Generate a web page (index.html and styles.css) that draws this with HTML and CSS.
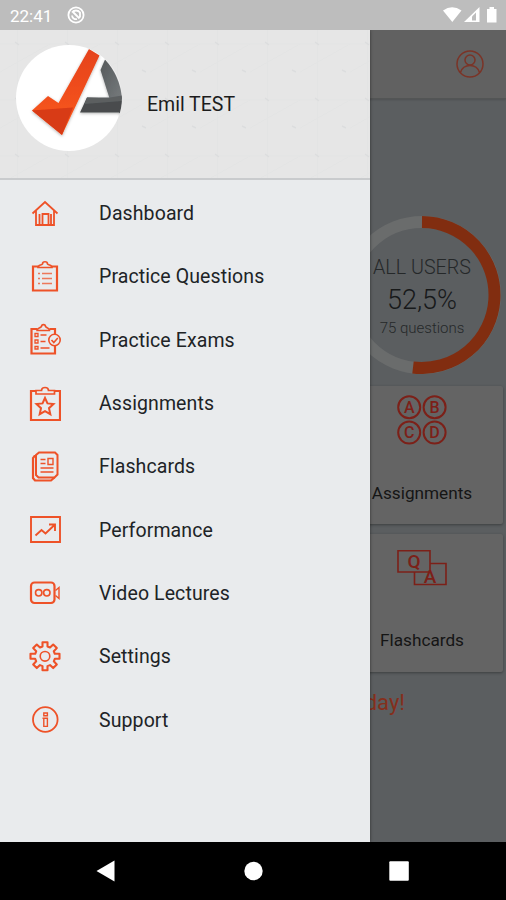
FILE: index.html
```html
<!DOCTYPE html>
<html lang="en">

<head>
    <meta charset="UTF-8">
    <meta name="viewport" content="width=device-width, initial-scale=1.0">
    <title>Dashboard</title>
    <link rel="stylesheet" href="styles.css">
</head>

<body>
    <div class="status-bar">
        <span class="time">22:41</span>
        <svg class="status-app" width="18" height="18" viewBox="0 0 18 18">
            <circle cx="9" cy="9" r="7.6" fill="none" stroke="#fff" stroke-width="1.8" />
            <path d="M5 6.5a5 5 0 0 1 8 0v5M5 9.500a4 4 0 0 0 5 3.500M5.500 5.500l7 7" fill="none" stroke="#fff" stroke-width="1.8" />
        </svg>
        <svg class="status-icons" width="56" height="18" viewBox="0 0 56 18">
            <path d="M0 4.500Q9 -2 18.500 4.500L9.300 16z" fill="#fff" />
            <path d="M21 16L36.500 1v15z" fill="#fff" />
            <path d="M29 10.500l4-4v8h-4z" fill="#bdbdbd" />
            <path d="M44 3h2.500V1h4.500v2h2.500v13.500H44z" fill="#fff" />
        </svg>
    </div>

    <div class="screen">
        <!-- Dashboard, dimmed while the menu is open -->
        <div class="page">
            <div class="toolbar">
                <svg width="28" height="28" viewBox="0 0 28 28" fill="none" stroke="#7b3427" stroke-width="1.5">
                    <circle cx="14" cy="14" r="13" />
                    <circle cx="14" cy="10" r="5" />
                    <path d="M4.500 22.500C6 17.500 10 15.500 14 15.500s8 2 9.500 7" />
                </svg>
            </div>
            <div class="column">
                <div class="score">
                    <svg class="ring" width="158" height="158" viewBox="0 0 158 158" fill="none" stroke-width="12">
                        <circle cx="79" cy="79" r="73" stroke="#6a6c6c" />
                        <path d="M79 6A73 73 0 1 1 70 151.500" stroke="#812d10" />
                    </svg>
                    <div class="score-text">
                        <div class="score-title">ALL USERS</div>
                        <div class="score-value">52,5%</div>
                        <div class="score-count">75 questions</div>
                    </div>
                </div>
                <div class="card">
                    <svg width="50" height="50" viewBox="0 0 50 50">
                        <g fill="none" stroke="#7c2018" stroke-width="2">
                            <circle cx="12.200" cy="12.200" r="11" />
                            <circle cx="37.600" cy="12.200" r="11" />
                            <circle cx="12.200" cy="37.600" r="11" />
                            <circle cx="37.600" cy="37.600" r="11" />
                        </g>
                        <g class="letters">
                            <text x="12.200" y="18">A</text>
                            <text x="37.600" y="18">B</text>
                            <text x="12.200" y="43.400">C</text>
                            <text x="37.600" y="43.400">D</text>
                        </g>
                    </svg>
                    <span>Assignments</span>
                </div>
                <div class="card">
                    <svg width="50" height="50" viewBox="0 0 50 50">
                        <path d="M17.500 22V34.500H49V13.500H33.500M1 .8H33V22H1z" fill="none" stroke="#7c2018" stroke-width="1.600" />
                        <g class="letters letters-big">
                            <text x="17" y="18">Q</text>
                            <text x="33" y="33">A</text>
                        </g>
                    </svg>
                    <span>Flashcards</span>
                </div>
            </div>
            <div class="motto">day!</div>
        </div>

        <!-- Side menu -->
        <div class="drawer">
            <div class="profile">
                <svg class="pattern" width="370" height="148">
                    <defs>
                        <pattern id="dots" width="50" height="56" patternUnits="userSpaceOnUse">
                            <path d="M17.500 0V56M0 14H50M0 42l50-28" fill="none" stroke="#e3e4e4" stroke-width="1" />
                            <path d="M15 12l4 3M42 40l4 2" stroke="#dcddde" stroke-width="1.500" />
                        </pattern>
                    </defs>
                    <rect width="370" height="148" fill="url(#dots)" />
                </svg>
                <svg class="avatar" width="108" height="108" viewBox="0 0 108 108">
                    <defs>
                        <linearGradient id="check" x1="0" y1="0" x2="0" y2="1">
                            <stop offset="0" stop-color="#e5421a" />
                            <stop offset="1" stop-color="#fb5a1c" />
                        </linearGradient>
                        <linearGradient id="leg" x1="0" y1="0" x2="1" y2="1">
                            <stop offset="0" stop-color="#55595b" />
                            <stop offset="1" stop-color="#777b7d" />
                        </linearGradient>
                        <clipPath id="round"><circle cx="54" cy="54" r="53" /></clipPath>
                        <filter id="soft" x="-20%" y="-20%" width="140%" height="140%">
                            <feDropShadow dx="0" dy="1" stdDeviation="1.500" flood-opacity=".3" />
                        </filter>
                    </defs>
                    <circle cx="54" cy="54" r="53" fill="#fff" />
                    <g clip-path="url(#round)">
                        <g filter="url(#soft)">
                            <path d="M90 15.500Q105 32 107 54L95 56 85.500 26z" fill="url(#leg)" />
                            <path d="M72 53.500L108 55V73l-4-4.500H65z" fill="#484b4d" />
                            <path d="M72 53.500H95l12-2v5.500L69.500 60z" fill="#5b5f61" />
                        </g>
                        <g filter="url(#soft)">
                            <path d="M74 5L84.500 11.500L47 91L17 66.500L33 52L43.500 59z" fill="url(#check)" />
                            <path d="M17 66.500L58 63.500 47 91z" fill="#d83a18" />
                        </g>
                    </g>
                </svg>
                <span class="user-name">Emil TEST</span>
            </div>
            <ul class="menu">
                <li>
                    <svg viewBox="0 0 32 36" stroke-width="1.800">
                        <path d="M3.500 17.500L16 6 28.500 17.500M7 15V29H25V15M10.500 18V28.500M13.500 28.500V18H19.500V28.500M22 18V28.500" />
                    </svg>
                    <span>Dashboard</span>
                </li>
                <li>
                    <svg viewBox="0 0 32 36" stroke-width="1.700">
                        <path d="M9 7.500H4V31.500H28V7.500H23" stroke-width="2.200" />
                        <path d="M9 8.500c0-3 3-2 4.500-3.500 0-3 5-3 5 0C20 6.500 23 5.500 23 8.500z" />
                        <path d="M9 14.500h2M13 14.500h10M9 19.500h2M13 19.500h10M9 24.500h2M13 24.500h10" stroke-opacity=".75" />
                    </svg>
                    <span>Practice Questions</span>
                </li>
                <li>
                    <svg viewBox="0 0 32 36" stroke-width="1.600">
                        <path d="M8 7H2.500V31.500H26V24M26 12V7H20.500" stroke-width="2.200" />
                        <path d="M8 8.500c0-3 3-2 4.500-4 0-2.500 4-2.500 4 0C18 6.500 20.500 5.500 20.500 8.500z" />
                        <path d="M6 11.500h3v3H6zM6 18h3v3H6zM6 24.500h3v2.500H6zM11.500 13h6M11.500 19.500h5M11.500 26h9" stroke-width="1.300" />
                        <circle cx="25.500" cy="18" r="5.700" />
                        <path d="M22.500 18l2.300 2.500 4-4.500" />
                    </svg>
                    <span>Practice Exams</span>
                </li>
                <li>
                    <svg viewBox="0 0 32 36" stroke-width="1.700">
                        <path d="M7 5H2V34H31V5H25.500" stroke-width="2.200" />
                        <path d="M7 8V4.500h5.500c0-4 7-4 7 0h6V8z" />
                        <path d="M16 12l2.500 5.400 6 .7-4.500 4.100 1.300 6-5.300-3.100-5.300 3.100 1.300-6L7.500 18.100l6-.7z" stroke-width="2" />
                    </svg>
                    <span>Assignments</span>
                </li>
                <li>
                    <svg viewBox="0 0 32 36" stroke-width="2">
                        <path d="M10 3.500H26l2.500 2.500V25.500l-3 3H9.500L7 26V6z" />
                        <path d="M7 7H5.500L4 9V29l2 2.500H22L25.500 28.500" stroke-width="2.200" />
                        <path d="M11.500 10.500h5M11.500 14.500h5M19 9.500h5v6h-5zM11.500 19h13M11.500 23h13" stroke-width="1.400" />
                    </svg>
                    <span>Flashcards</span>
                </li>
                <li>
                    <svg viewBox="0 0 32 36" stroke-width="1.900">
                        <path d="M2 5H31V30H2z" />
                        <path d="M6.500 23.500L12.500 18l4 3.500L25.500 13M20 12.500h6V19" />
                    </svg>
                    <span>Performance</span>
                </li>
                <li>
                    <svg viewBox="0 0 32 36" stroke-width="1.600">
                        <rect x="2" y="7.500" width="23.500" height="20.500" rx="3.500" stroke-width="2.200" />
                        <circle cx="9.700" cy="17.800" r="3.200" />
                        <circle cx="17.800" cy="17.800" r="3.200" />
                        <path d="M26.500 15.500l3.500-3V23.500l-3.500-3" stroke-width="1.400" />
                    </svg>
                    <span>Video Lectures</span>
                </li>
                <li>
                    <svg viewBox="0 0 32 36" stroke-width="2.100" stroke-linejoin="round">
                        <path d="M13.500 3.300h5v4.200l2.500 1 3.200-3 3.600 3.600-3 3.200 1 2.500H30.500v5H25.800l-1 2.500 3 3.200-3.600 3.600-3.200-3-2.500 1V31.300h-5V27.100l-2.500-1-3.200 3-3.600-3.600 3-3.200-1-2.500H1.500v-5H6.200l1-2.500-3-3.200L7.800 5.500l3.200 3 2.500-1z" />
                        <circle cx="16" cy="17.300" r="4.800" stroke-width="1.600" />
                    </svg>
                    <span>Settings</span>
                </li>
                <li>
                    <svg viewBox="0 0 32 36" stroke-width="1.800">
                        <circle cx="16.300" cy="17.500" r="12.300" />
                        <path d="M14.800 11h3.600v2.800h-3.600zM13.500 16.200h4.900v8.200h-3.600v-8" stroke-width="1.400" />
                    </svg>
                    <span>Support</span>
                </li>
            </ul>
        </div>
    </div>

    <div class="nav-bar">
        <svg width="22" height="22" viewBox="0 0 22 22"><path d="M.500 11L18.500 .5v21z" /></svg>
        <svg width="22" height="22" viewBox="0 0 22 22"><circle cx="11.500" cy="11" r="9.200" /></svg>
        <svg width="22" height="22" viewBox="0 0 22 22"><rect x="1.300" y="1.300" width="19.500" height="19.500" rx="1" /></svg>
    </div>
</body>

</html>
```
FILE: styles.css
```css
* {
    box-sizing: border-box;
    margin: 0;
    padding: 0;
}

body {
    font-family: Roboto, sans-serif;
    display: flex;
    flex-direction: column;
    width: 506px;
    height: 900px;
    overflow: hidden;
    background-color: #000;
}

svg {
    display: block;
    flex-shrink: 0;
}

.status-bar {
    display: flex;
    align-items: center;
    height: 30px;
    padding: 0 7px 0 10px;
    background-color: #bdbdbd;
    color: #fff;
}

.time {
    width: 57px;
    font-size: 17px;
    line-height: 30px;
    padding-top: 1px;
}

.status-icons {
    margin-left: auto;
}

.screen {
    position: relative;
    height: 812px;
    overflow: hidden;
}

.page {
    height: 812px;
    background-color: #5b5e60;
}

.toolbar {
    display: flex;
    justify-content: flex-end;
    align-items: center;
    height: 69px;
    padding-right: 22px;
    background-color: #616161;
    border-bottom: 1px solid #535555;
    box-shadow: 0 1px 2px rgba(0, 0, 0, 0.15);
}

.column {
    display: flex;
    flex-direction: column;
    gap: 10px;
    width: 162px;
    margin-left: auto;
    margin-right: 3px;
    padding-top: 117px;
}

.score {
    display: grid;
    justify-items: center;
    height: 160px;
}

.ring,
.score-text {
    grid-area: 1 / 1;
}

.score-text {
    padding-top: 39px;
    text-align: center;
    white-space: nowrap;
    color: #252829;
}

.score-title {
    font-size: 19.7px;
    font-weight: 300;
    line-height: 26px;
}

.score-value {
    font-size: 27px;
    font-weight: 300;
    line-height: 38px;
    color: #17191a;
}

.score-count {
    font-size: 15px;
    font-weight: 300;
    line-height: 18px;
}

.card {
    display: flex;
    flex-direction: column;
    align-items: center;
    height: 138px;
    padding-top: 9px;
    background-color: #646464;
    border-radius: 2px;
    box-shadow: 0 1px 3px rgba(0, 0, 0, 0.35);
}

.card + .card {
    padding-top: 16px;
}

.card span {
    margin-top: 37px;
    font-size: 17.2px;
    line-height: 22px;
    color: #151515;
}

.card + .card span {
    margin-top: 29px;
}

.letters {
    font-size: 16px;
    font-weight: 500;
    fill: #7c2018;
    text-anchor: middle;
}

.letters-big {
    font-size: 19px;
}

.motto {
    padding: 17px 101px 0 0;
    text-align: right;
    font-size: 22px;
    line-height: 28px;
    color: #852f1c;
}

/* Drawer */
.drawer {
    position: absolute;
    top: 0;
    left: 0;
    width: 370px;
    height: 812px;
    background-color: #e9ebed;
    box-shadow: 0 0 3px rgba(0, 0, 0, 0.5);
}

.profile {
    display: grid;
    grid-template-columns: 147px 1fr;
    align-items: center;
    height: 150px;
    background-color: #e6e6e6;
    border-bottom: 2px solid #c9cbcd;
}

.pattern {
    grid-area: 1 / 1 / 2 / 3;
}

.avatar {
    grid-area: 1 / 1;
    margin: 0 0 12px 15px;
}

.user-name {
    grid-area: 1 / 2;
    padding-top: 2px;
    font-size: 19.5px;
    line-height: 24px;
    color: #1c1c1c;
}

.menu {
    list-style: none;
    padding-top: 2px;
}

.menu li {
    display: flex;
    align-items: center;
    height: 63.3px;
    padding-left: 29px;
    font-size: 19.5px;
    letter-spacing: 0.1px;
    color: #202326;
}

.menu svg {
    width: 32px;
    height: 36px;
    margin-right: 38px;
    fill: none;
    stroke: #ee5228;
}

/* System buttons */
.nav-bar {
    display: flex;
    justify-content: space-between;
    align-items: center;
    height: 58px;
    padding: 0 96px;
    background-color: #000;
}

.nav-bar svg {
    fill: #fff;
}
```
